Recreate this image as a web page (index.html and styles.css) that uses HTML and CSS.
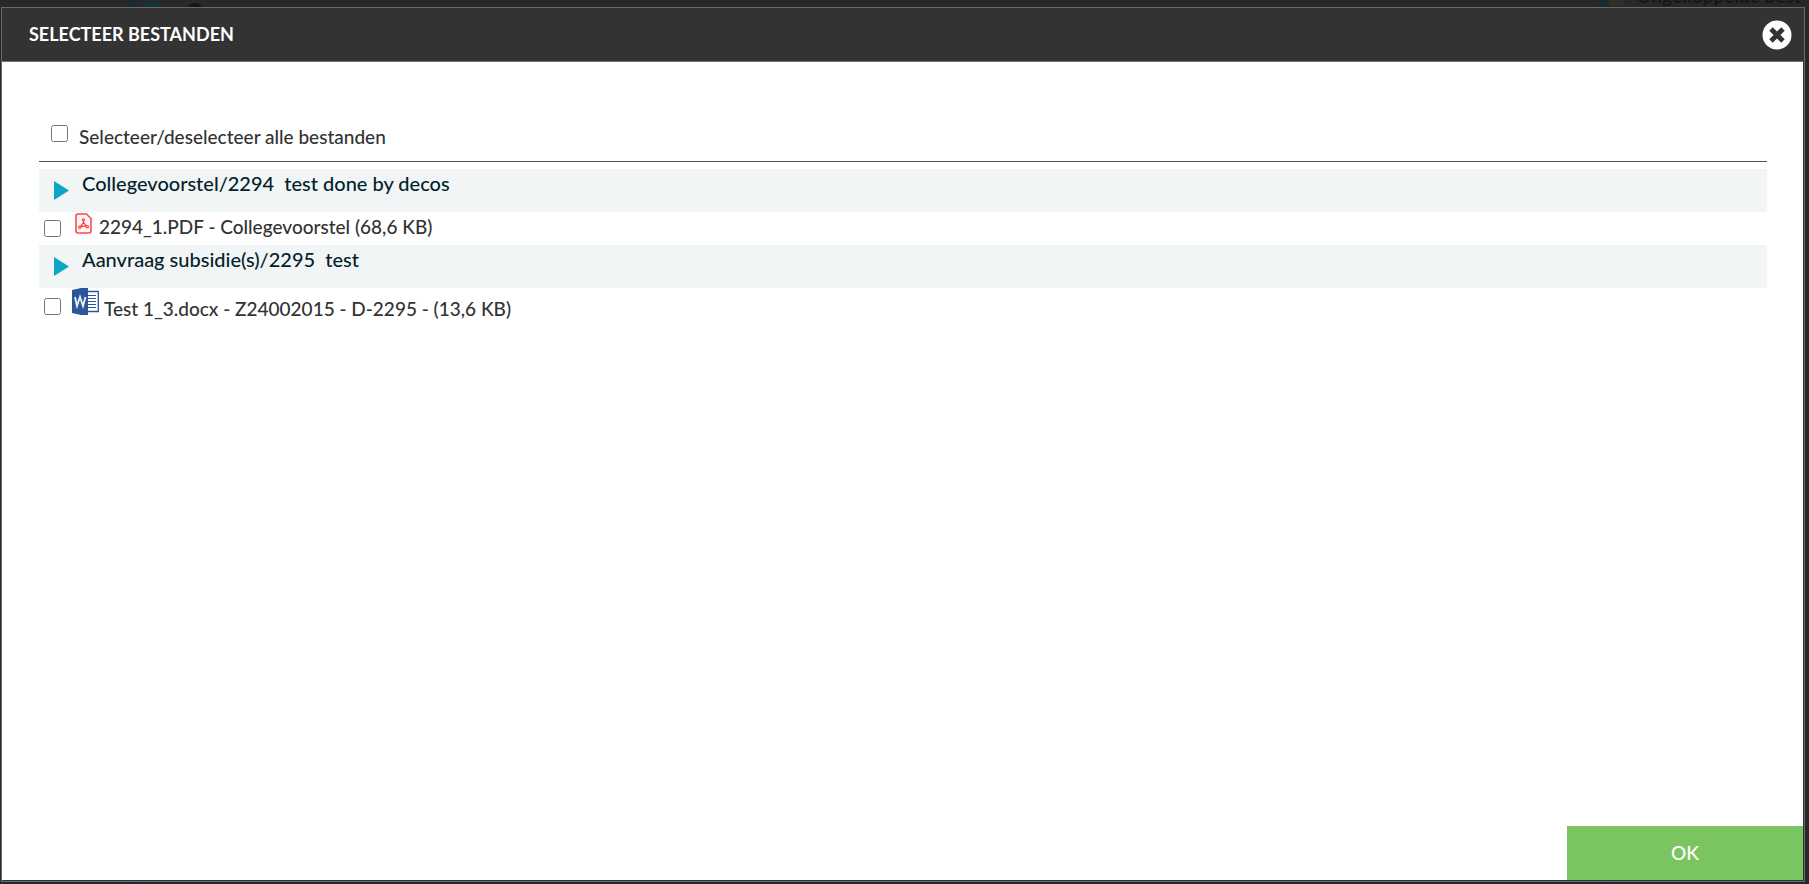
FILE: index.html
```html
<!DOCTYPE html>
<html lang="nl">
<head>
<meta charset="utf-8">
<title>Selecteer bestanden</title>
<link rel="stylesheet" href="styles.css">
</head>
<body>
<div class="backdrop" aria-hidden="true">
  <span class="stripe stripe-left"></span>
  <svg class="gear" viewBox="0 0 20 20"><circle cx="10" cy="10" r="6" fill="none" stroke="#173238" stroke-width="5"/><path d="M10 0v4M3 3l3 3M17 3l-3 3" stroke="#173238" stroke-width="4"/></svg>
  <span class="dot"></span>
  <span class="stripe stripe-right"></span>
  <span class="folder"></span>
  <span class="behind">Ongekoppelde best</span>
</div>
<div class="dialog" role="dialog" aria-labelledby="title">
  <header class="header">
    <h1 class="title" id="title">SELECTEER BESTANDEN</h1>
    <button class="close" type="button" aria-label="Sluiten">
      <svg viewBox="0 0 30 30" width="30" height="30"><circle cx="15" cy="15" r="14.5" fill="#fff"/><path d="M9 9l12 12M21 9L9 21" stroke="#333" stroke-width="4.800"/></svg>
    </button>
  </header>
  <main class="content">
    <div class="select-all">
      <input class="check" type="checkbox" id="all">
      <label class="all-label" for="all">Selecteer/deselecteer alle bestanden</label>
    </div>
    <section>
      <h2 class="group">
        <svg class="arrow" viewBox="0 0 15 19"><path d="M0 0l15 9.500L0 19z" fill="#0ba6c4"/></svg>
        <span class="group-name">Collegevoorstel/2294&nbsp; test done by decos</span>
      </h2>
      <div class="file">
        <input class="check" type="checkbox" id="pdf">
        <label class="file-label" for="pdf">
          <svg class="icon-pdf" viewBox="0 0 17 21"><path d="M3 1h8.500L16 5.500V18a2 2 0 0 1-2 2H3a2 2 0 0 1-2-2V3a2 2 0 0 1 2-2z" fill="#fff5f5" stroke="#fb4a48" stroke-width="1.600"/><path d="M8.500 6.500v3.200M8.500 9.700L5.200 14M8.500 9.700l3.300 3.700M5.500 13.600l6-.8" fill="none" stroke="#f23d3d" stroke-width="1.200"/><g fill="#fff5f5" stroke="#f23d3d" stroke-width="1.100"><circle cx="8.400" cy="6.800" r="1.100"/><circle cx="4.700" cy="14.300" r="1.200"/><circle cx="12.300" cy="13.700" r="1.200"/></g></svg>
          <span class="pdf-name">2294_1.PDF - Collegevoorstel (68,6 KB)</span>
        </label>
      </div>
    </section>
    <section>
      <h2 class="group">
        <svg class="arrow" viewBox="0 0 15 19"><path d="M0 0l15 9.500L0 19z" fill="#0ba6c4"/></svg>
        <span class="group-name">Aanvraag subsidie(s)/2295&nbsp; test</span>
      </h2>
      <div class="file file-word">
        <input class="check" type="checkbox" id="doc">
        <label class="file-label" for="doc">
          <svg class="icon-word" viewBox="0 0 27 27"><path d="M15 3.500h11.300v20H15" fill="#fff" stroke="#2b5699" stroke-width="1.300"/><path d="M16 7.500h8M16 10.500h8M16 13.500h8M16 16.500h8M16 19.500h8" stroke="#2b5699" stroke-width="1.200"/><path d="M0 2L9 0h7v27H9L0 25z" fill="#2b5699"/><path d="M3 9l2 9 3-9 3 9 2.500-9" fill="none" stroke="#e8eef8" stroke-width="1.900"/></svg>
          <span class="word-name">Test 1_3.docx - Z24002015 - D-2295 - (13,6 KB)</span>
        </label>
      </div>
    </section>
  </main>
  <footer class="footer">
    <button class="ok" type="button">OK</button>
  </footer>
</div>
</body>
</html>
```
FILE: styles.css
```css
* { box-sizing: border-box; }
body {
  margin: 0;
  height: 100vh;
  display: flex;
  padding: 7px 4px 2px 1px;
  overflow: hidden;
  background: #292828;
  color: #333;
  font-family: Lato, "Open Sans", sans-serif;
  font-size: 19px;
  font-weight: 500;
  line-height: 24px;
}
.backdrop {
  position: absolute;
  inset: 0;
  overflow: hidden;
}
.stripe {
  position: absolute;
  top: 0;
  bottom: 0;
  width: 9px;
  background: #1b2a30;
}
.stripe-left { left: 129px; }
.stripe-right { right: 202px; }
.gear {
  position: absolute;
  left: 143px;
  top: 0;
  width: 20px;
  height: 20px;
}
.dot {
  position: absolute;
  left: 187px;
  top: 3px;
  width: 16px;
  height: 16px;
  border-radius: 50%;
  background: #161616;
}
.folder {
  position: absolute;
  right: 185px;
  top: 0;
  width: 15px;
  height: 6px;
  background: #302e25;
}
.behind {
  position: absolute;
  right: 8px;
  top: -16px;
  color: #171717;
  font-size: 19px;
  font-weight: 700;
}
.dialog {
  position: relative;
  flex: 1;
  display: flex;
  flex-direction: column;
  padding: 0 1px 1px 0;
  background: #333;
  border: 1px solid #626a72;
}
.header {
  display: flex;
  align-items: center;
  justify-content: space-between;
  height: 54px;
  padding: 0 11px 0 27px;
  border-bottom: 1px solid #66747e;
}
.title {
  margin: 0;
  padding-bottom: 2px;
  color: #fff;
  font-size: 18px;
  font-weight: 700;
}
.close {
  display: flex;
  padding: 0;
  border: 0;
  background: none;
}
.content {
  flex: 1;
  padding: 60px 36px 0 37px;
  background: #fff;
}
.select-all {
  display: flex;
  align-items: flex-start;
  height: 40px;
  margin-bottom: 7px;
  padding: 3px 12px 0;
  border-bottom: 1px solid #555;
}
.check {
  flex: none;
  width: 17px;
  height: 17px;
  margin: 0;
}
.all-label { margin-left: 11px; }
.group {
  display: flex;
  height: 43px;
  margin: 0;
  padding-left: 15px;
  background: #f1f5f6;
  color: #061f2b;
  font-size: 20px;
  font-weight: 500;
}
.arrow {
  width: 15px;
  height: 19px;
  margin-top: 12px;
}
.group-name {
  margin-left: 13px;
  padding-top: 2px;
}
.file {
  display: flex;
  align-items: flex-start;
  height: 33px;
  padding-left: 5px;
}
.file .check { margin-top: 8px; }
.file-label {
  display: flex;
  align-items: flex-start;
}
.icon-pdf {
  width: 17px;
  height: 21px;
  margin: 1px 7px 0 14px;
}
.pdf-name { padding-top: 3px; }
.file-word { height: 38px; }
.file-word .check { margin-top: 10px; }
.icon-word {
  width: 27px;
  height: 27px;
  margin: 0 5px 0 11px;
}
.word-name { padding-top: 9px; }
.footer {
  display: flex;
  justify-content: flex-end;
  background: #fff;
}
.ok {
  width: 236px;
  height: 54px;
  border: 0;
  background: #7bc561;
  color: #fff;
  font: inherit;
}
```
